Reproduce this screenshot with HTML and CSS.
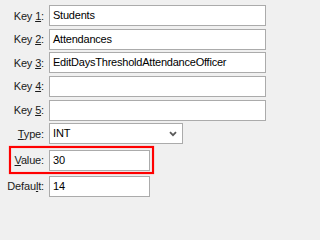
FILE: index.html
```
<!DOCTYPE html>
<html>
<head>
<meta charset="utf-8">
<link rel="stylesheet" href="styles.css">
</head>
<body>
<div class="form">
  <div class="row"><span class="lbl">Key <u>1</u>:</span><div class="field wide">Students</div></div>
  <div class="row"><span class="lbl">Key <u>2</u>:</span><div class="field wide">Attendances</div></div>
  <div class="row"><span class="lbl">Key <u>3</u>:</span><div class="field wide">EditDaysThresholdAttendanceOfficer</div></div>
  <div class="row"><span class="lbl">Key <u>4</u>:</span><div class="field wide"></div></div>
  <div class="row"><span class="lbl">Key <u>5</u>:</span><div class="field wide"></div></div>
  <div class="row"><span class="lbl"><u>T</u>ype:</span><div class="field select"><span>INT</span><svg class="chev" width="8" height="6" viewBox="0 0 8 6"><path d="M1 1.2 L4 4.2 L7 1.2" fill="none" stroke="#5a5a5a" stroke-width="1.8"/></svg></div></div>
  <div class="row value"><span class="lbl"><u>V</u>alue:</span><div class="field short">30</div></div>
  <div class="row dflt"><span class="lbl">Defau<u>l</u>t:</span><div class="field short">14</div></div>
  <div class="highlight"></div>
</div>
</body>
</html>
```
FILE: styles.css
```
html, body {
  margin: 0;
  padding: 0;
  background: #f0f0f0;
}
.form {
  position: relative;
  width: 271px;
  height: 202px;
  padding-top: 5px;
  box-sizing: border-box;
  display: flex;
  flex-direction: column;
  gap: 2.67px;
  font-family: "Liberation Sans", Arial, sans-serif;
  font-size: 11px;
  letter-spacing: -0.15px;
  color: #000;
}
.row {
  display: flex;
  align-items: center;
  height: 21px;
}
.row.value {
  margin-top: 3px;
}
.row.dflt {
  margin-top: 2.33px;
}
.lbl {
  width: 44px;
  margin-right: 5px;
  text-align: right;
  white-space: nowrap;
  color: #1a1a1a;
}
.lbl u {
  text-decoration-thickness: 1px;
  text-underline-offset: 1px;
}
.field {
  box-sizing: border-box;
  height: 21px;
  border: 1px solid #ababab;
  background: #fff;
  padding-left: 3px;
  line-height: 19px;
  white-space: nowrap;
  overflow: hidden;
}
.wide {
  width: 217px;
  letter-spacing: -0.22px;
}
.select {
  width: 134px;
  display: flex;
  justify-content: space-between;
  align-items: center;
  padding-right: 5px;
}
.chev {
  display: block;
  margin-top: 1px;
}
.short {
  width: 101px;
}
.highlight {
  position: absolute;
  left: 9px;
  top: 146px;
  width: 145px;
  height: 28px;
  box-sizing: border-box;
  border: 2px solid #ff0000;
  box-shadow: 0 0 1px rgba(255, 0, 0, 0.6), inset 0 0 1px rgba(255, 0, 0, 0.6);
}
```
